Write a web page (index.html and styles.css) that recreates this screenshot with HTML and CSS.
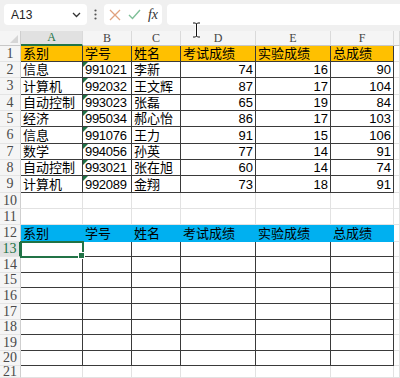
FILE: index.html
```html
<!DOCTYPE html>
<html lang="zh-CN">
<head>
    <meta charset="UTF-8">
    <title>成绩表</title>
    <link rel="stylesheet" href="styles.css">
</head>
<body>
    <div class="topbar">
        <div class="namebox">
            <span>A13</span>
            <svg width="9" height="6" viewBox="0 0 9 6"><polyline points="1,1 4.5,4.5 8,1" fill="none" stroke="#333" stroke-width="1.3"/></svg>
        </div>
        <div class="dots">
            <svg width="3" height="11" viewBox="0 0 3 11"><circle cx="1.5" cy="1.5" r="1.1" fill="#555"/><circle cx="1.5" cy="5.5" r="1.1" fill="#555"/><circle cx="1.5" cy="9.5" r="1.1" fill="#555"/></svg>
        </div>
        <div class="fx-tools">
            <svg width="12" height="12" viewBox="0 0 12 12"><path d="M1 1 L11 11 M11 1 L1 11" stroke="#e0a27e" stroke-width="1.3"/></svg>
            <svg width="13" height="11" viewBox="0 0 13 11"><polyline points="1,6 4.5,9.5 12,1" fill="none" stroke="#7fbf98" stroke-width="1.4"/></svg>
            <span class="fx">fx</span>
        </div>
        <div class="formula"></div>
        <svg class="ibeam" width="9" height="16" viewBox="0 0 9 16"><path d="M1 1 H3.5 L4.5 2 L5.5 1 H8 M4.5 2 V14 M1 15 H3.5 L4.5 14 L5.5 15 H8" fill="none" stroke="#fff" stroke-width="2.6"/><path d="M1 1 H3.5 L4.5 2 L5.5 1 H8 M4.5 2 V14 M1 15 H3.5 L4.5 14 L5.5 15 H8" fill="none" stroke="#111" stroke-width="1"/></svg>
    </div>

    <div class="sheet">
        <!-- column heads -->
        <div class="corner"></div>
        <div class="ch on">A</div><div class="ch">B</div><div class="ch">C</div><div class="ch">D</div><div class="ch">E</div><div class="ch">F</div><div class="ch"></div>

        <!-- table 1 -->
        <div class="rh">1</div><div class="c t gold">系别</div><div class="c t gold">学号</div><div class="c t gold">姓名</div><div class="c t gold">考试成绩</div><div class="c t gold">实验成绩</div><div class="c t gold">总成绩</div><div class="c"></div>
        <div class="rh">2</div><div class="c t">信息</div><div class="c t tx">991021</div><div class="c t">李新</div><div class="c t n">74</div><div class="c t n">16</div><div class="c t n">90</div><div class="c"></div>
        <div class="rh">3</div><div class="c t">计算机</div><div class="c t tx">992032</div><div class="c t">王文辉</div><div class="c t n">87</div><div class="c t n">17</div><div class="c t n">104</div><div class="c"></div>
        <div class="rh">4</div><div class="c t">自动控制</div><div class="c t tx">993023</div><div class="c t">张磊</div><div class="c t n">65</div><div class="c t n">19</div><div class="c t n">84</div><div class="c"></div>
        <div class="rh">5</div><div class="c t">经济</div><div class="c t tx">995034</div><div class="c t">郝心怡</div><div class="c t n">86</div><div class="c t n">17</div><div class="c t n">103</div><div class="c"></div>
        <div class="rh">6</div><div class="c t">信息</div><div class="c t tx">991076</div><div class="c t">王力</div><div class="c t n">91</div><div class="c t n">15</div><div class="c t n">106</div><div class="c"></div>
        <div class="rh">7</div><div class="c t">数学</div><div class="c t tx">994056</div><div class="c t">孙英</div><div class="c t n">77</div><div class="c t n">14</div><div class="c t n">91</div><div class="c"></div>
        <div class="rh">8</div><div class="c t">自动控制</div><div class="c t tx">993021</div><div class="c t">张在旭</div><div class="c t n">60</div><div class="c t n">14</div><div class="c t n">74</div><div class="c"></div>
        <div class="rh">9</div><div class="c t">计算机</div><div class="c t tx">992089</div><div class="c t">金翔</div><div class="c t n">73</div><div class="c t n">18</div><div class="c t n">91</div><div class="c"></div>

        <div class="rh">10</div><div class="c"></div><div class="c"></div><div class="c"></div><div class="c"></div><div class="c"></div><div class="c"></div><div class="c"></div>
        <div class="rh">11</div><div class="c"></div><div class="c"></div><div class="c"></div><div class="c"></div><div class="c"></div><div class="c"></div><div class="c"></div>

        <!-- table 2 -->
        <div class="rh">12</div><div class="c blue">系别</div><div class="c blue">学号</div><div class="c blue">姓名</div><div class="c blue">考试成绩</div><div class="c blue">实验成绩</div><div class="c blue">总成绩</div><div class="c"></div>
        <div class="rh on">13</div><div class="c t sel"></div><div class="c t"></div><div class="c t"></div><div class="c t"></div><div class="c t"></div><div class="c t"></div><div class="c"></div>
        <div class="rh">14</div><div class="c t"></div><div class="c t"></div><div class="c t"></div><div class="c t"></div><div class="c t"></div><div class="c t"></div><div class="c"></div>
        <div class="rh">15</div><div class="c t"></div><div class="c t"></div><div class="c t"></div><div class="c t"></div><div class="c t"></div><div class="c t"></div><div class="c"></div>
        <div class="rh">16</div><div class="c t"></div><div class="c t"></div><div class="c t"></div><div class="c t"></div><div class="c t"></div><div class="c t"></div><div class="c"></div>
        <div class="rh">17</div><div class="c t"></div><div class="c t"></div><div class="c t"></div><div class="c t"></div><div class="c t"></div><div class="c t"></div><div class="c"></div>
        <div class="rh">18</div><div class="c t"></div><div class="c t"></div><div class="c t"></div><div class="c t"></div><div class="c t"></div><div class="c t"></div><div class="c"></div>
        <div class="rh">19</div><div class="c t"></div><div class="c t"></div><div class="c t"></div><div class="c t"></div><div class="c t"></div><div class="c t"></div><div class="c"></div>
        <div class="rh">20</div><div class="c t"></div><div class="c t"></div><div class="c t"></div><div class="c t"></div><div class="c t"></div><div class="c t"></div><div class="c"></div>
        <div class="rh">21</div><div class="c"></div><div class="c"></div><div class="c"></div><div class="c"></div><div class="c"></div><div class="c"></div><div class="c"></div>
    </div>
</body>
</html>
```

FILE: styles.css
```css
:root {
    --bar-bg: #f0f0f0;
    --head-bg: #f5f5f5;
    --head-on: #e1e1e1;
    --grid: #e2e2e2;
    --line: #3a3a3a;
    --green: #217346;
    --gold: #ffc000;
    --blue: #00b0f0;
}

* {
    margin: 0;
    padding: 0;
    box-sizing: border-box;
}

body {
    width: 400px;
    height: 378px;
    overflow: hidden;
    background-color: #fff;
    font-family: "Liberation Sans", "Noto Sans CJK SC", sans-serif;
}

/* formula bar */
.topbar {
    position: relative;
    height: 31px;
    padding: 4px 0 0 4px;
    display: flex;
    align-items: flex-start;
    background-color: var(--bar-bg);
}

.namebox {
    width: 83px;
    height: 21px;
    padding: 0 6px 0 7px;
    display: flex;
    align-items: center;
    justify-content: space-between;
    background-color: #fff;
    border-radius: 4px;
    font-size: 12px;
    color: #222;
}

.dots {
    width: 17px;
    height: 21px;
    display: flex;
    align-items: center;
    justify-content: center;
}

.fx-tools {
    width: 58px;
    height: 21px;
    padding: 0 4px 0 5px;
    display: flex;
    align-items: center;
    justify-content: space-between;
    background-color: #fff;
    border-radius: 4px;
}

.fx {
    font: italic 14px "Liberation Serif", serif;
    color: #333;
    line-height: 1;
}

.formula {
    flex: 1;
    height: 21px;
    margin-left: 5px;
    background-color: #fff;
    border-radius: 4px 0 0 4px;
}

.ibeam {
    position: absolute;
    left: 192px;
    top: 22px;
}

/* grid */
.sheet {
    display: grid;
    grid-template-columns: 21px 62px 49px 49px 75px 75px 63px 6px;
    grid-template-rows:
        15px
        16px 16px 17px 16px 16px 17px 16px 16px 17px 16px 16px 17px
        15px 16px 15px 16px 16px 15px 16px 15px
        12px;
}

.corner {
    position: relative;
    background-color: var(--head-bg);
    border-right: 1px solid #cfcfcf;
    border-bottom: 1px solid #c8c8c8;
}

.corner::after {
    content: "";
    position: absolute;
    right: 2px;
    bottom: 2px;
    border-style: solid;
    border-width: 0 0 8px 8px;
    border-color: transparent transparent #d6d6d6 transparent;
}

.ch {
    display: flex;
    align-items: center;
    justify-content: center;
    overflow: hidden;
    background-color: var(--head-bg);
    border-right: 1px solid #dadada;
    border-bottom: 1px solid #c8c8c8;
    font: 12px "Liberation Serif", serif;
    color: #444;
}

.ch.on {
    background-color: var(--head-on);
    color: var(--green);
    border-bottom: 2px solid var(--green);
}

.rh {
    display: flex;
    align-items: center;
    justify-content: center;
    background-color: var(--head-bg);
    border-right: 1px solid #cfcfcf;
    border-bottom: 1px solid #e4e4e4;
    font: 14px "Liberation Serif", serif;
    color: #4a4a4a;
    line-height: 1;
}

.rh.on {
    background-color: var(--head-on);
    color: var(--green);
    border-right: 2px solid var(--green);
}

.c {
    position: relative;
    padding: 0 2px;
    display: flex;
    align-items: flex-end;
    overflow: hidden;
    white-space: nowrap;
    border-right: 1px solid var(--grid);
    border-bottom: 1px solid var(--grid);
    font-size: 13px;
    line-height: 15px;
    color: #000;
}

.c.t {
    border-right-color: var(--line);
    border-bottom-color: var(--line);
}

.c.n {
    justify-content: flex-end;
}

.c.tx {
    letter-spacing: -0.3px;
}

.c.tx::before {
    content: "";
    position: absolute;
    left: 0;
    top: 0;
    border-style: solid;
    border-width: 5px 5px 0 0;
    border-color: #1e7145 transparent transparent transparent;
}

.gold {
    background-color: var(--gold);
}

.c.blue {
    background-color: var(--blue);
    border-color: transparent;
}

.c.sel {
    z-index: 1;
    overflow: visible;
    outline: 2px solid var(--green);
    outline-offset: -1px;
}

.c.sel::after {
    content: "";
    position: absolute;
    right: -3px;
    bottom: -3px;
    width: 5px;
    height: 5px;
    background-color: var(--green);
    border: 1px solid #fff;
}
```
